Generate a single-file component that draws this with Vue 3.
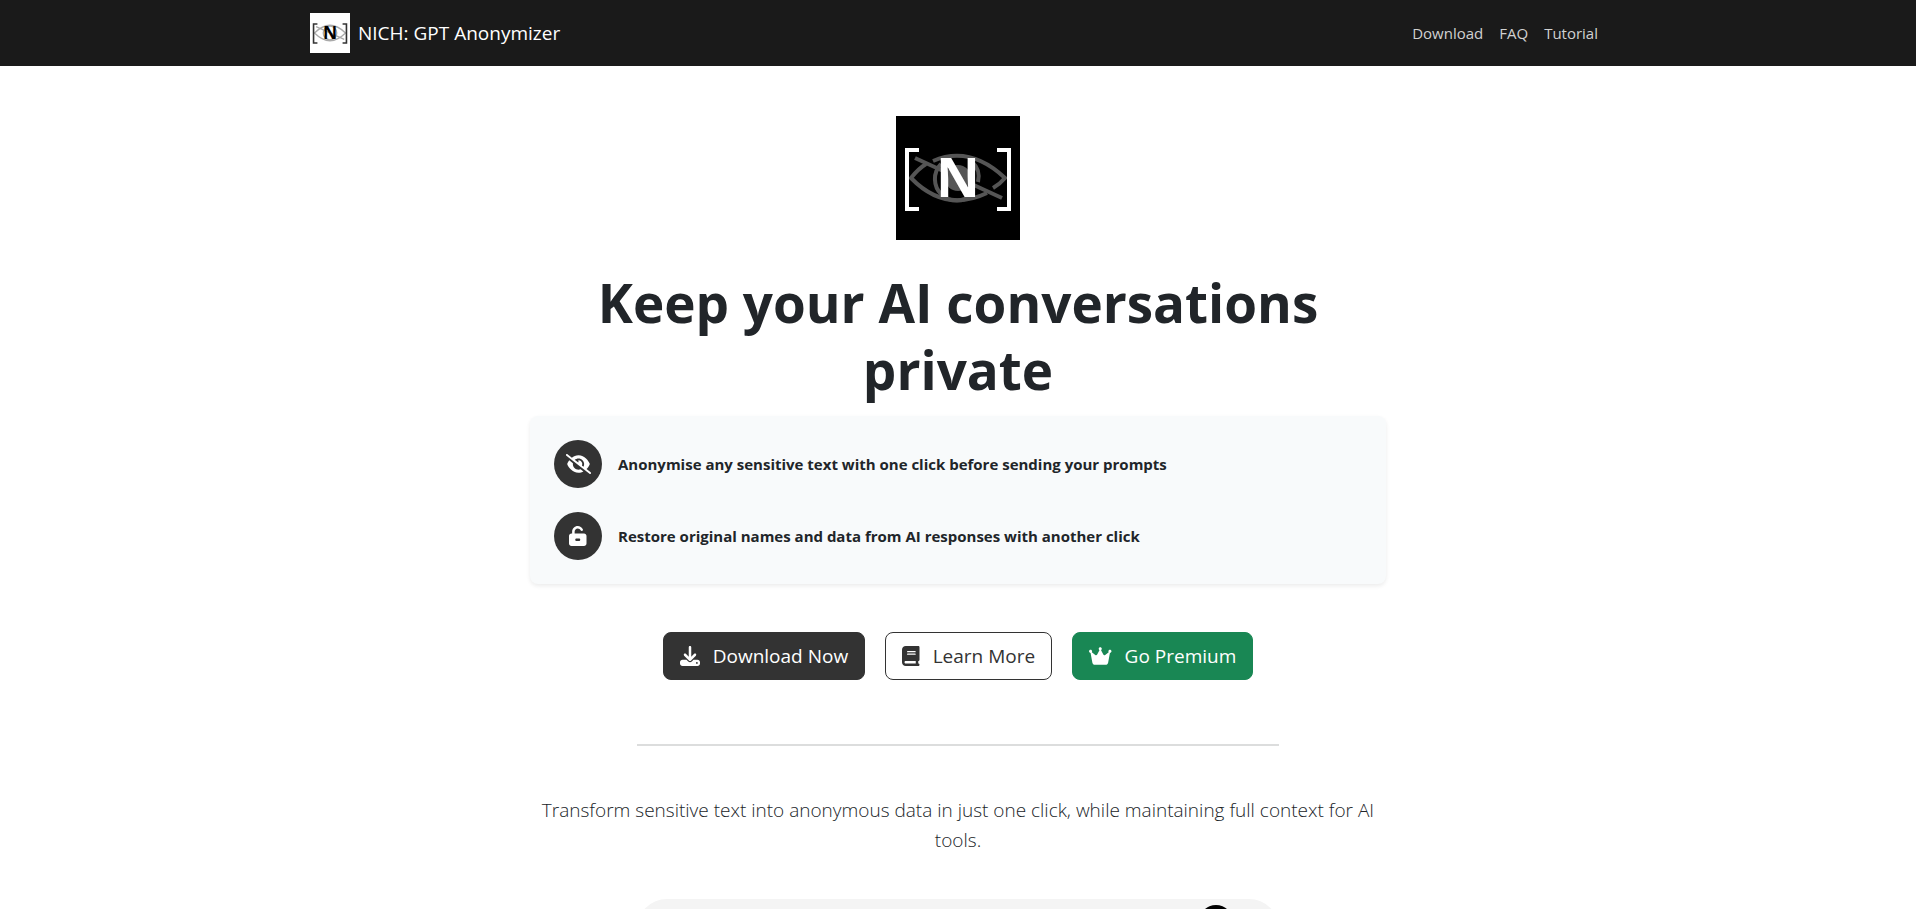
<script setup>
import { ref } from 'vue'

const links = ref(['Download', 'FAQ', 'Tutorial'])

// Icon shapes, drawn on a 512 unit high grid
const icons = {
  eyeSlash: {
    width: 640,
    path: 'M38.8 5.1C28.4-3.1 13.3-1.2 5.1 9.2S-1.2 34.7 9.2 42.9l592 464c10.4 8.2 25.5 6.3 33.7-4.1s6.3-25.5-4.1-33.7L525.6 386.7c39.6-40.6 66.4-86.1 79.9-118.4c3.3-7.9 3.3-16.7 0-24.6c-14.9-35.7-46.2-87.7-93-131.1C465.5 68.8 400.8 32 320 32c-68.2 0-125 26.3-169.3 60.8L38.8 5.1zM223.1 149.5C248.6 126.2 282.7 112 320 112c79.5 0 144 64.5 144 144c0 24.9-6.3 48.3-17.4 68.7L408 294.5c8.4-19.3 10.6-41.4 4.8-63.3c-11.1-41.5-47.8-69.4-88.6-71.1c-5.8-.2-9.2 6.1-7.4 11.7c2.1 6.4 3.3 13.2 3.3 20.3c0 10.2-2.4 19.8-6.6 28.3l-90.3-70.8zM373 389.9c-16.4 6.5-34.3 10.1-53 10.1c-79.5 0-144-64.5-144-144c0-6.9 .5-13.6 1.4-20.2L83.1 161.5C60.3 191.2 44 220.8 34.5 243.7c-3.3 7.9-3.3 16.7 0 24.6c14.9 35.7 46.2 87.7 93 131.1C174.5 443.2 239.2 480 320 480c47.8 0 89.9-12.9 126.2-32.5L373 389.9z'
  },
  unlock: {
    width: 448,
    path: 'M224 64c-44.2 0-80 35.8-80 80v48H384c35.3 0 64 28.7 64 64V448c0 35.3-28.7 64-64 64H64c-35.3 0-64-28.7-64-64V256c0-35.3 28.7-64 64-64H80V144C80 64.5 144.5 0 224 0c57.5 0 107 33.7 130.1 82.3c7.6 16 .8 35.1-15.2 42.6s-35.1 .8-42.6-15.2C283.4 82.6 255.9 64 224 64zm32 320c17.7 0 32-14.3 32-32s-14.3-32-32-32H192c-17.7 0-32 14.3-32 32s14.3 32 32 32h64z'
  },
  download: {
    width: 512,
    path: 'M288 32c0-17.7-14.3-32-32-32s-32 14.3-32 32V274.7l-73.4-73.4c-12.5-12.5-32.8-12.5-45.3 0s-12.5 32.8 0 45.3l128 128c12.5 12.5 32.8 12.5 45.3 0l128-128c12.5-12.5 12.5-32.8 0-45.3s-32.8-12.5-45.3 0L288 274.7V32zM64 352c-35.3 0-64 28.7-64 64v32c0 35.3 28.7 64 64 64H448c35.3 0 64-28.7 64-64V416c0-35.3-28.7-64-64-64H346.5l-45.3 45.3c-25 25-65.5 25-90.5 0L165.5 352H64zm368 56a24 24 0 1 1 0 48 24 24 0 1 1 0-48z'
  },
  book: {
    width: 448,
    path: 'M96 0C43 0 0 43 0 96V416c0 53 43 96 96 96H384h32c17.7 0 32-14.3 32-32s-14.3-32-32-32V384c17.7 0 32-14.3 32-32V32c0-17.7-14.3-32-32-32H384 96zm0 384H352v64H96c-17.7 0-32-14.3-32-32s14.3-32 32-32zm32-240c0-8.8 7.2-16 16-16H336c8.8 0 16 7.2 16 16s-7.2 16-16 16H144c-8.8 0-16-7.2-16-16zm16 48H336c8.8 0 16 7.2 16 16s-7.2 16-16 16H144c-8.8 0-16-7.2-16-16s7.2-16 16-16z'
  },
  crown: {
    width: 576,
    path: 'M309 106c11.4-7 19-19.7 19-34c0-22.1-17.9-40-40-40s-40 17.9-40 40c0 14.4 7.6 27 19 34L209.7 220.6c-9.1 18.2-32.7 23.4-48.6 10.7L72 160c5-6.7 8-15 8-24c0-22.1-17.9-40-40-40S0 113.9 0 136s17.9 40 40 40c.2 0 .5 0 .7 0L86.4 427.4c5.5 30.4 32 52.6 63 52.6H426.6c30.9 0 57.4-22.1 63-52.6L535.3 176c.2 0 .5 0 .7 0c22.1 0 40-17.9 40-40s-17.9-40-40-40s-40 17.9-40 40c0 9 3 17.3 8 24l-89.1 71.3c-15.9 12.7-39.5 7.5-48.6-10.7L309 106z'
  }
}

const features = [
  { icon: icons.eyeSlash, text: 'Anonymise any sensitive text with one click before sending your prompts' },
  { icon: icons.unlock, text: 'Restore original names and data from AI responses with another click' }
]

const actions = [
  { icon: icons.download, label: 'Download Now', type: 'dark' },
  { icon: icons.book, label: 'Learn More', type: 'outline' },
  { icon: icons.crown, label: 'Go Premium', type: 'success' }
]
</script>

<template>
  <div class="page">
    <header class="navbar">
      <div class="container">
        <a href="#" class="brand">
          <svg class="logo logo-small" viewBox="0 0 124 124" aria-hidden="true">
            <rect width="124" height="124" fill="#fff" />
            <g class="eye">
              <path d="M14 62Q62 14 110 62Q62 110 14 62z" />
              <circle cx="62" cy="62" r="21" />
              <path d="M19 42L106 82" />
            </g>
            <path class="bracket" d="M23 34H11V93H23M101 34H113V93H101" />
            <text x="62" y="81" text-anchor="middle">N</text>
          </svg>
          <span>NICH: GPT Anonymizer</span>
        </a>
        <nav>
          <a v-for="link in links" :key="link" href="#">{{ link }}</a>
        </nav>
      </div>
    </header>

    <main class="hero">
      <svg class="logo logo-large" viewBox="0 0 124 124" aria-hidden="true">
        <rect width="124" height="124" fill="#000" />
        <g class="eye">
          <path d="M37 45Q74 29 109 62Q104 68 97 72" />
          <path d="M30 48Q22 53 15 62Q49 97 91 77" />
          <path d="M45 48A21 21 0 1 0 76 78M76 46Q85 54 82 66" />
          <path d="M19 42L106 82" />
          <circle class="pupil" cx="62" cy="62" r="13" />
        </g>
        <path class="bracket" d="M23 34H11V93H23M101 34H113V93H101" />
        <text x="62" y="81" text-anchor="middle">N</text>
      </svg>

      <h1>Keep your AI conversations private</h1>

      <ul class="features">
        <li v-for="feature in features" :key="feature.text">
          <span class="feature-icon">
            <svg class="icon" :viewBox="`0 0 ${feature.icon.width} 512`" aria-hidden="true">
              <path :d="feature.icon.path" />
            </svg>
          </span>
          <strong>{{ feature.text }}</strong>
        </li>
      </ul>

      <div class="actions">
        <a v-for="action in actions" :key="action.label" href="#" class="btn" :class="action.type">
          <svg class="icon" :viewBox="`0 0 ${action.icon.width} 512`" aria-hidden="true">
            <path :d="action.icon.path" />
          </svg>
          {{ action.label }}
        </a>
      </div>

      <hr />

      <p class="lead">
        Transform sensitive text into anonymous data in just one click, while maintaining full context for AI tools.
      </p>

      <!-- top of the demo panel, continues below the fold -->
      <div class="demo">
        <span class="demo-dot"></span>
      </div>
    </main>
  </div>
</template>

<style>
body {
  margin: 0;
  background: #fff;
}
</style>

<style scoped>
.page {
  height: 100vh;
  overflow: hidden;
  font-family: 'Open Sans', 'Noto Sans', sans-serif;
  font-size: 16px;
  line-height: 24px;
  color: #212529;
}

a {
  color: inherit;
  text-decoration: none;
}

.navbar {
  background: #1a1a1a;
}
.container {
  display: flex;
  align-items: center;
  justify-content: space-between;
  max-width: 1296px;
  margin: 0 auto;
  padding: 13px 12px;
}
.brand {
  display: flex;
  align-items: center;
  gap: 8px;
  font-size: 19px;
  color: #fff;
}
nav {
  display: flex;
  font-size: 15px;
  color: #d1d1d1;
}
nav a {
  padding: 0 8px;
}

.logo {
  display: block;
}
.logo text {
  font-size: 54px;
  font-weight: 700;
}
.logo-small {
  width: 40px;
  height: 40px;
}
.logo-large {
  width: 124px;
  height: 124px;
}
.eye {
  fill: none;
  stroke: #555;
  stroke-width: 4;
}
.logo-small .eye {
  stroke: #aaa;
}
.eye .pupil {
  fill: #555;
  stroke: none;
}
.bracket {
  fill: none;
  stroke: #fff;
  stroke-width: 4;
}
.logo-large text {
  fill: #fff;
}
.logo-small .bracket {
  stroke: #333;
  stroke-width: 5;
}

.hero {
  display: flex;
  flex-direction: column;
  align-items: center;
  max-width: 856px;
  margin: 0 auto;
  padding: 50px 12px 0;
  text-align: center;
}

h1 {
  margin: 29px 0 13px;
  font-size: 53px;
  line-height: 67px;
  font-weight: 700;
}

.features {
  box-sizing: border-box;
  display: flex;
  flex-direction: column;
  gap: 24px;
  width: 100%;
  margin: 0;
  padding: 24px;
  list-style: none;
  background: #f8fafb;
  border-radius: 8px;
  box-shadow: 0 2px 4px rgba(0, 0, 0, 0.08);
  text-align: left;
}
.features li {
  display: flex;
  align-items: center;
  gap: 16px;
}
.features strong {
  font-size: 15px;
  font-weight: 700;
}
.feature-icon {
  display: flex;
  align-items: center;
  justify-content: center;
  width: 48px;
  height: 48px;
  border-radius: 50%;
  background: #333;
  color: #fff;
}

.icon {
  height: 20px;
  fill: currentColor;
}

.actions {
  display: flex;
  gap: 20px;
  margin-top: 48px;
}
.btn {
  display: flex;
  align-items: center;
  gap: 13px;
  padding: 8px 16px;
  border: 1px solid #333;
  border-radius: 8px;
  font-size: 19px;
  line-height: 30px;
}
.btn.dark {
  background: #333;
  color: #fff;
}
.btn.outline {
  background: #fff;
  color: #333;
}
.btn.success {
  background: #198754;
  border-color: #198754;
  color: #fff;
}

hr {
  width: 75%;
  margin: 64px 0 49px;
  border: 0;
  border-top: 2px solid #dcdddd;
}

.lead {
  margin: 0 0 44px;
  font-size: 19px;
  font-weight: 300;
  line-height: 30px;
}

.demo {
  display: flex;
  justify-content: flex-end;
  box-sizing: border-box;
  width: 75%;
  height: 200px;
  padding: 6px 46px;
  background: #f4f4f4;
  border-radius: 30px;
}
.demo-dot {
  width: 34px;
  height: 34px;
  border-radius: 50%;
  background: #000;
}
</style>
